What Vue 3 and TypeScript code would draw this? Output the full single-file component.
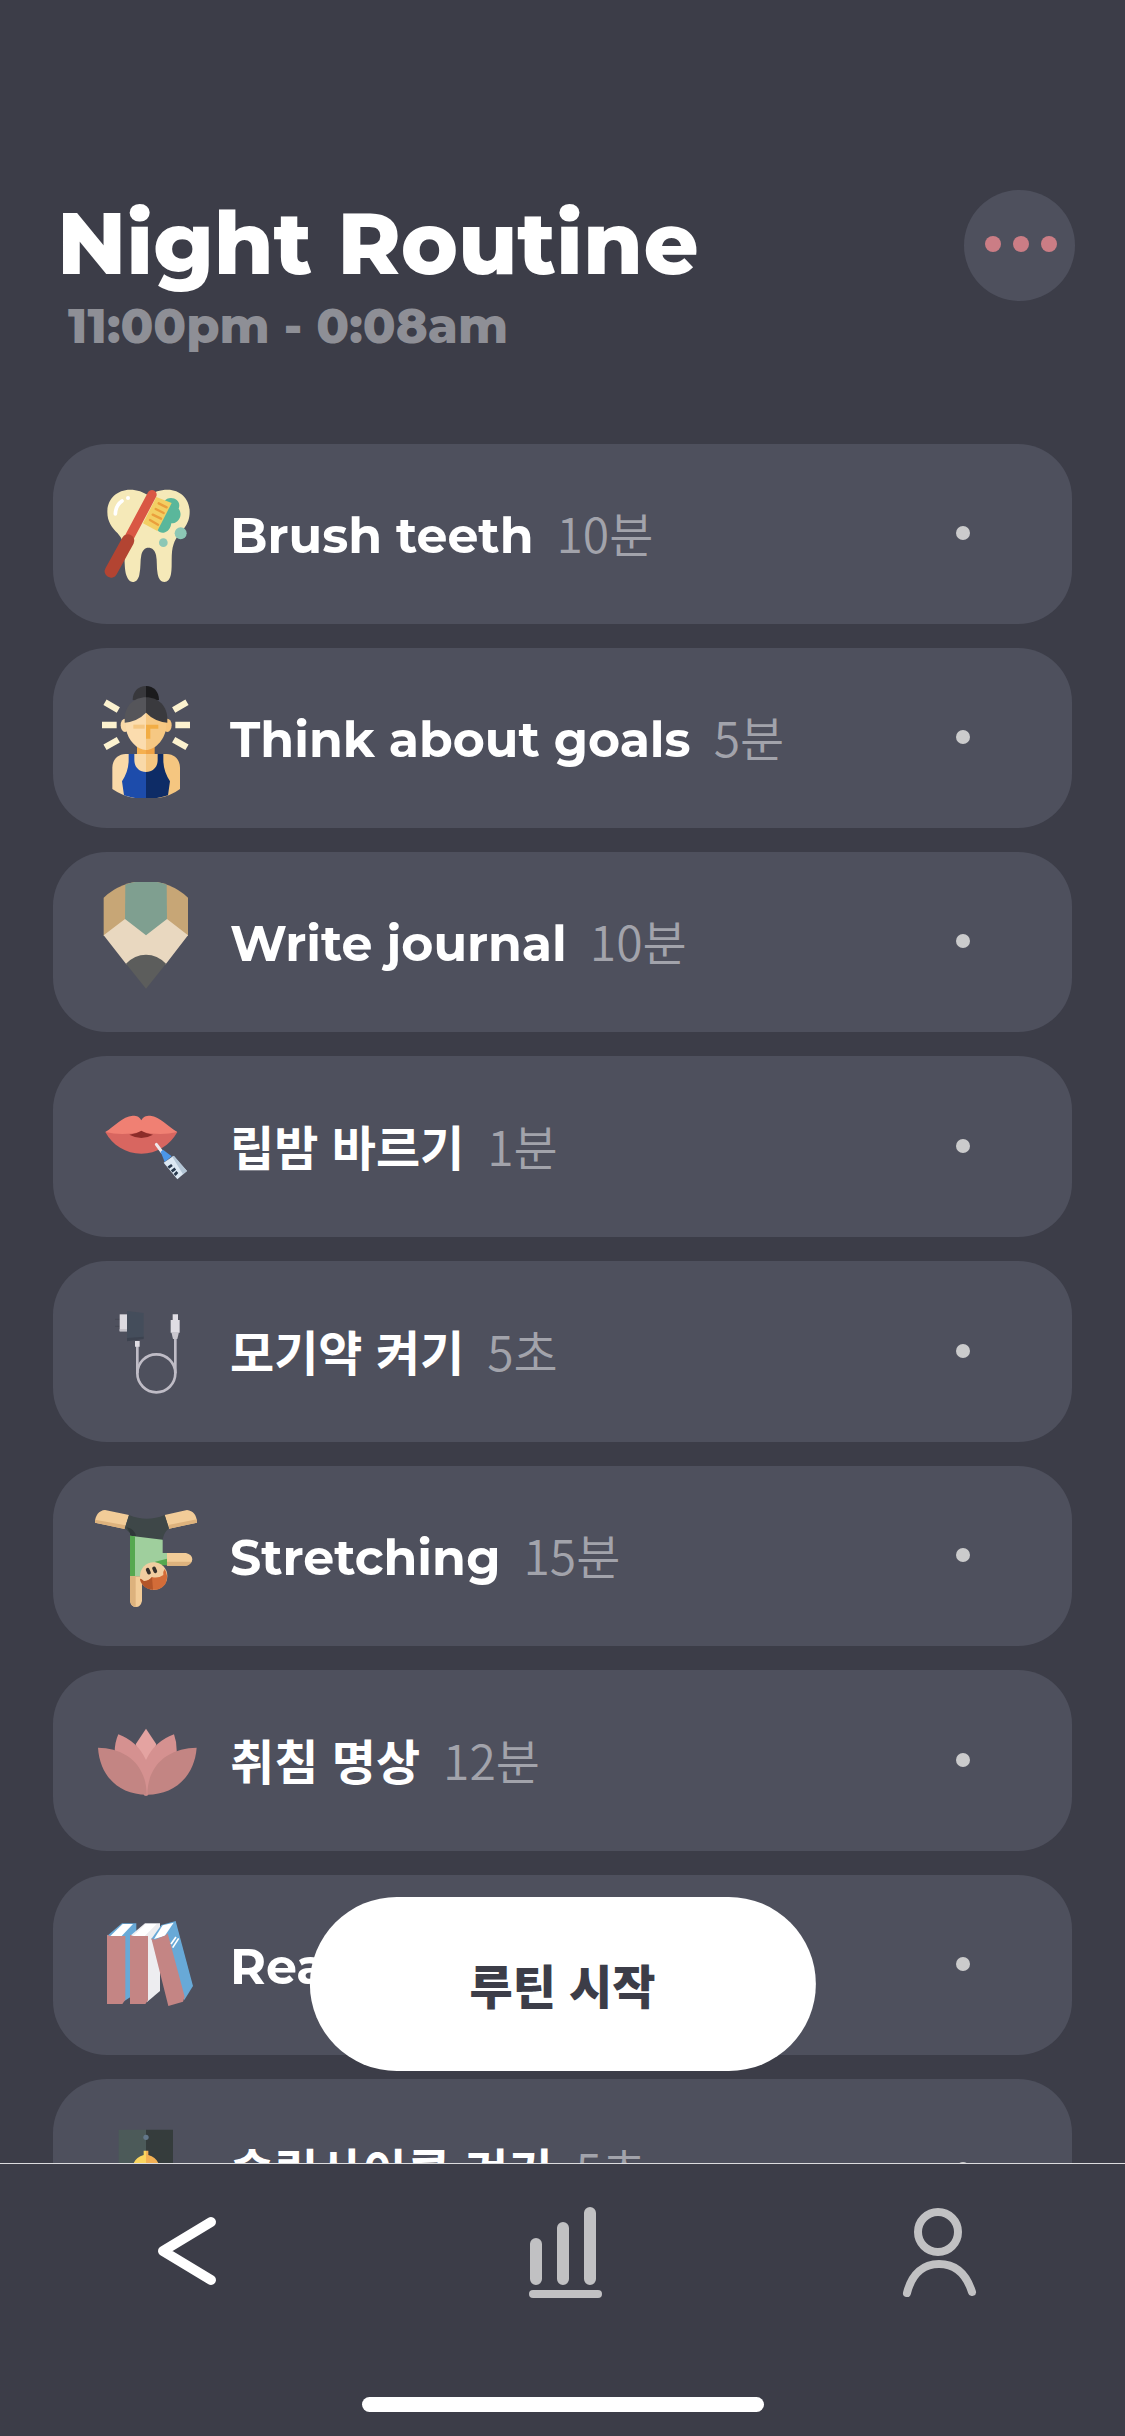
<script setup lang="ts">
type IconName = 'tooth' | 'focus' | 'pencil' | 'lips' | 'charger' | 'stretch' | 'lotus' | 'books' | 'sleep'

interface RoutineStep {
  name: string
  duration: string
  lang: 'en' | 'ko'
  icon: IconName
  viewBox: string
}

const steps: RoutineStep[] = [
  { name: 'Brush teeth', duration: '10분', lang: 'en', icon: 'tooth', viewBox: '108 102 360 360' },
  { name: 'Think about goals', duration: '5분', lang: 'en', icon: 'focus', viewBox: '108 99 360 360' },
  { name: 'Write journal', duration: '10분', lang: 'en', icon: 'pencil', viewBox: '108 96 360 360' },
  { name: '립밤 바르기', duration: '1분', lang: 'ko', icon: 'lips', viewBox: '108 94 360 360' },
  { name: '모기약 켜기', duration: '5초', lang: 'ko', icon: 'charger', viewBox: '108 94 360 360' },
  { name: 'Stretching', duration: '15분', lang: 'en', icon: 'stretch', viewBox: '108 93 360 360' },
  { name: '취침 명상', duration: '12분', lang: 'ko', icon: 'lotus', viewBox: '108 91 360 360' },
  { name: 'Reading', duration: '20분', lang: 'en', icon: 'books', viewBox: '108 105 360 360' },
  { name: '슬립사이클 켜기', duration: '5초', lang: 'ko', icon: 'sleep', viewBox: '108 718 360 360' },
]
</script>

<template>
  <div class="screen">
    <div class="content">
      <header class="header">
        <div>
          <h1 class="title">Night Routine</h1>
          <p class="time">11:00pm - 0:08am</p>
        </div>
        <button class="more" type="button" aria-label="More options">
          <span class="more-dot"></span>
          <span class="more-dot"></span>
          <span class="more-dot"></span>
        </button>
      </header>

      <ul class="list">
        <li v-for="step in steps" :key="step.name" class="card" :class="{ tall: step.lang === 'ko' }">
          <svg class="icon" :viewBox="step.viewBox" aria-hidden="true">
            <g v-if="step.icon === 'tooth'">
              <path fill="#f5e9b8" d="M295 166C280 156 262 149 240 149C200 149 172 178 172 215C172 246 186 262 203 280C216 295 222 310 223 335C224 370 224 390 229 406C233 419 240 426 248 426C258 426 265 418 268 404C273 382 270 362 274 345C277 331 285 323 295 323C307 323 315 331 318 345C322 362 319 382 323 402C326 418 333 426 343 426C353 426 360 418 363 402C368 375 361 340 371 312C378 290 392 280 403 264C413 249 419 236 419 215C419 178 392 149 353 149C330 149 312 156 295 166Z" />
              <path d="M196 222C197 202 204 191 216 183" fill="none" stroke="#fff" stroke-width="11" stroke-linecap="round" />
              <circle cx="234" cy="174" r="6" fill="#fff" />
              <path fill="#5ab79b" d="M343 184C350 172 370 170 381 181C389 189 389 198 386 206C395 218 393 235 382 244C377 249 370 250 364 250C362 265 354 276 341 278C333 279 327 276 322 270Z" />
              <path fill="#f3cf63" d="M319 171L365 189L322 273L279 250Z" />
              <path d="M326 190L350 202M317 207L341 219M308 224L333 236M300 240L324 254" fill="none" stroke="#ea9f3c" stroke-width="7" stroke-linecap="round" />
              <path d="M306 164L240 288" stroke="#d95744" stroke-width="28" stroke-linecap="round" />
              <path d="M234 302L183 394" stroke="#b34432" stroke-width="38" stroke-linecap="round" />
              <circle cx="392" cy="280" r="18" fill="#8cc7b5" />
              <circle cx="340" cy="308" r="13" fill="#8cc7b5" />
            </g>

            <g v-else-if="step.icon === 'focus'">
              <path d="M165 172L205 195M371 195L411 172M156 240H200M376 240H420M165 307L205 284M371 284L411 307" stroke="#fcf2cf" stroke-width="19" />
              <path fill="#38383c" d="M248 165C248 140 265 123 288 123V170Z" />
              <path fill="#1b1b1d" d="M327 165C327 140 311 123 288 123V170Z" />
              <ellipse cx="225" cy="241" rx="13" ry="20" fill="#f9d9a8" />
              <ellipse cx="352" cy="241" rx="13" ry="20" fill="#f5c47d" />
              <path fill="#f5b04f" d="M261 295H288V340H261Z" />
              <path fill="#efa244" d="M288 295H314V340H288Z" />
              <path fill="#f9d9a8" d="M288 327H227C203 327 187 345 187 368V432Q230 462 288 462Z" />
              <path fill="#f5c680" d="M288 327H350C374 327 390 345 390 368V432Q350 462 288 462Z" />
              <path fill="#1d4cab" d="M236 327H253V345C253 367 268 381 288 381V462Q252 461 222 451L216 409Q236 378 236 345Z" />
              <path fill="#0e2c66" d="M340 327H323V345C323 367 308 381 288 381V462Q324 461 354 451L360 409Q340 378 340 345Z" />
              <path fill="#fbdcae" d="M288 195Q244 220 228 233V252C234 287 262 315 288 315Z" />
              <path fill="#f6c883" d="M288 195Q332 220 348 233V252C342 287 314 315 288 315Z" />
              <path fill="#f5c783" d="M250 239H284V251H250Z" />
              <path fill="#f2ad45" d="M288 239H325V251H301V281H288Z" />
              <path fill="#55555a" d="M288 157C251 157 224 184 224 222V233Q263 229 288 203Z" />
              <path fill="#3a3a3e" d="M288 157C325 157 352 184 352 222V233Q313 229 288 203Z" />
            </g>

            <g v-else-if="step.icon === 'pencil'">
              <path fill="#c7a676" d="M161 143A185 185 0 0 1 414 143V258H161Z" />
              <path fill="#7f9f90" d="M226 104A185 185 0 0 1 350 104L351 215L288 262L225 215Z" />
              <path fill="#e9d8c0" d="M161 256L225 207L288 256L351 207L414 256L347 343H229Z" />
              <path fill="#5c5d5c" d="M228 341Q254 314 288 314Q322 314 348 341L288 416Z" />
            </g>

            <g v-else-if="step.icon === 'lips'">
              <path fill="#d86660" d="M166 229C187 269 228 294 274 294C320 294 360 269 382 229Q274 215 166 229Z" />
              <path fill="#f08073" d="M166 229C195 211 217 182 248 180C262 180 269 184 274 194C279 184 286 180 301 180C331 184 353 211 382 229Q330 241 274 228Q218 241 166 229Z" />
              <path fill="#8c2c29" d="M238 237Q259 235 274 225Q290 235 309 237Q291 247 274 247Q257 247 238 237Z" />
              <path d="M319 266L336 289" stroke="#eee8ec" stroke-width="9" stroke-linecap="round" />
              <path fill="#4b96e8" d="M332 288L339 282L365 302L344 319Z" />
              <path fill="#dce8f3" d="M341 321L370 301L411 346L382 371Z" />
              <path fill="#b4c6d6" d="M367 303L372 300L411 346L399 356Z" />
              <path d="M355 336L366 328M365 347L376 339M374 358L382 349" stroke="#28384c" stroke-width="8" />
            </g>

            <g v-else-if="step.icon === 'charger'">
              <path d="M195 176H211M195 197H211" stroke="#454852" stroke-width="3" />
              <path fill="#444d5b" d="M231 151L281 157V232L231 241Z" />
              <path fill="#3d4350" d="M231 232L281 228V235L231 242Z" />
              <path fill="#dcdae0" d="M209 161H231V212H209Z" />
              <path fill="#c5c3ca" d="M209 205H231V212H209Z" />
              <path d="M262 255V338M376 228V338" stroke="#bfbcc6" stroke-width="8" />
              <circle cx="319" cy="338" r="57" fill="none" stroke="#bfbcc6" stroke-width="8" />
              <path fill="#e0dde4" d="M255 241H269V258H255ZM368 161H384V180H368ZM362 178H389V216H362Z" />
              <path fill="#c9c6ce" d="M364 214H387L382 235H369Z" />
            </g>

            <g v-else-if="step.icon === 'stretch'">
              <path fill="#f2cc98" d="M237 150L165 135C147 136 135 152 135 173L224 192ZM344 150L411 135C429 137 441 151 441 173L357 191Z" />
              <path fill="#ddb27d" d="M135 164L226 181L224 192L135 173ZM355 180L441 163V173L357 191Z" />
              <path fill="#3e4748" d="M237 150Q291 173 344 150L357 190Q340 204 338 227L240 214V204L224 190Z" />
              <path fill="#303839" d="M230 187Q252 190 258 213L240 214V204Z" />
              <path fill="#9fcf9d" d="M240 212L338 224V264H351V300H315L275 334H240Z" />
              <path fill="#55a84f" d="M240 212L255 214V334H240ZM315 290L351 281V301H325Z" />
              <path fill="#f2cc98" d="M351 264H408Q426 268 427 283Q426 298 408 302H351ZM240 334H276V408Q272 426 258 426Q243 426 240 408Z" />
              <path fill="#ddb27d" d="M351 290H424Q418 302 408 302H351ZM240 334H257V426Q243 424 240 408Z" />
              <circle cx="311" cy="333" r="41" fill="#f1cda0" />
              <path fill="#d36c38" d="M270 341Q276 342 281 348Q293 350 306 336Q324 341 340 330Q338 320 344 312Q356 332 348 353C338 373 315 380 294 370C277 362 270 350 270 341Z" />
              <path fill="#b35529" d="M270 341Q276 342 281 348Q295 350 306 336L309 374Q278 373 270 341Z" />
              <path d="M293 314L297 323M312 310L316 319" stroke="#35302c" stroke-width="11" stroke-linecap="round" />
            </g>

            <g v-else-if="step.icon === 'lotus'">
              <path fill="#e4a3a1" d="M257 221L288 174L319 221L296 290H280Z" />
              <path fill="#d59190" d="M205 191Q262 212 288 268Q314 212 372 191Q381 215 380 246L292 375H284L194 246Q194 215 205 191Z" />
              <path fill="#c38583" d="M144 231C220 232 289 275 290 372C210 372 150 320 144 231ZM440 231C363 232 293 275 292 372C371 372 433 320 440 231Z" />
            </g>

            <g v-else-if="step.icon === 'books'">
              <path fill="#68a9d7" d="M171 198L216 160H259V370L222 394Z" />
              <path fill="#fff" d="M181 198L218 162H249L215 198Z" />
              <path fill="#c48584" d="M171 194L180 198H226V389L217 402H171Z" />
              <path fill="#ededf0" d="M240 198L285 160H330V363L291 396Z" />
              <path fill="#fff" d="M249 198L287 162H320L284 198Z" />
              <path fill="#c48584" d="M240 194L249 198H294V391L286 402H240Z" />
              <path fill="#68a9d7" d="M304 207L334 165L377 153L429 348L403 390Z" />
              <path fill="#fff" d="M312 207L338 166L371 158L344 198Z" />
              <path fill="#c48584" d="M304 205L314 209L347 196L353 190L404 380L399 395L355 408Z" />
              <path d="M363 222L378 201M368 233L386 205" stroke="#fff" stroke-width="5" />
            </g>

            <g v-else>
              <path fill="#4c5a59" d="M206 777H288V1000H206Z" />
              <path fill="#353c3c" d="M288 777H369V1000H288Z" />
              <circle cx="288" cy="800" r="8" fill="#63778a" />
              <path fill="#fbd65f" d="M288 840H281V853C259 858 247 876 247 898V940H288Z" />
              <path fill="#f3b154" d="M288 840H295V853C317 858 329 876 329 898V940H288Z" />
            </g>
          </svg>
          <p class="text">
            <span class="name" :lang="step.lang">{{ step.name }}</span>
            <span class="duration" lang="ko">{{ step.duration }}</span>
          </p>
          <span class="status"></span>
        </li>
      </ul>
    </div>

    <footer class="footer">
      <button class="start" type="button" lang="ko">루틴 시작</button>
      <nav class="tabs" aria-label="Main">
        <a class="tab" href="#back" aria-label="Back">
          <svg class="tab-icon active" viewBox="0 0 90 100" aria-hidden="true">
            <path d="M68 21L20 50L68 79" stroke-width="10" />
          </svg>
        </a>
        <a class="tab" href="#stats" aria-label="Statistics">
          <svg class="tab-icon" viewBox="-2 0 90 100" aria-hidden="true">
            <path d="M16 43V78M43 27V78M70 12V78" stroke-width="12" />
            <path d="M13 93H78" stroke-width="8" />
          </svg>
        </a>
        <a class="tab" href="#profile" aria-label="Profile">
          <svg class="tab-icon" viewBox="-2 0 90 100" aria-hidden="true">
            <circle cx="43" cy="31" r="20" stroke-width="8" />
            <path d="M12 92C17 72 29 63 44 63C60 63 71 72 77 91" stroke-width="8" />
          </svg>
        </a>
      </nav>
      <div class="home-bar"></div>
    </footer>
  </div>
</template>

<style>
body {
  margin: 0;
  background: #3c3d48;
}
</style>

<style scoped>
.screen {
  display: flex;
  flex-direction: column;
  height: 100vh;
  background: #3c3d48;
  color: #fff;
  font-family: Montserrat, Inter, 'Noto Sans CJK KR', sans-serif;
}

.content {
  flex: 1;
  min-height: 0;
  overflow-y: auto;
  scrollbar-width: none;
}

.header {
  display: flex;
  align-items: flex-start;
  justify-content: space-between;
  padding: 190px 50px 0 57px;
}

.title {
  margin: 0;
  font-size: 86px;
  line-height: 108px;
  font-weight: 800;
}

.time {
  margin: 0;
  padding-left: 11px;
  color: #8e8f96;
  font-size: 48px;
  line-height: 56px;
  font-weight: 800;
}

.more {
  display: flex;
  align-items: center;
  justify-content: center;
  gap: 12px;
  width: 111px;
  height: 111px;
  padding: 0 0 4px 2px;
  border: 0;
  border-radius: 50%;
  background: #4e505d;
}

.more-dot {
  width: 16px;
  height: 16px;
  border-radius: 50%;
  background: #cb7d85;
}

.list {
  display: flex;
  flex-direction: column;
  gap: 24px;
  margin: 0;
  padding: 90px 53px 24px;
  list-style: none;
}

.card {
  display: flex;
  align-items: center;
  box-sizing: border-box;
  min-height: 180px;
  padding: 0 102px 0 33px;
  border-radius: 54px;
  background: #4e505d;
}

.card.tall {
  min-height: 181px;
}

.icon {
  flex: none;
  width: 120px;
  height: 120px;
  margin-right: 24px;
}

.text {
  margin: 0;
  font-size: 49px;
  line-height: 60px;
}

.name {
  font-weight: 700;
}

.name:lang(ko) {
  font-family: 'Noto Sans CJK KR', sans-serif;
  font-size: 48px;
}

.duration {
  display: inline-block;
  margin-left: 10px;
  color: #a2a3ab;
  font-family: 'Noto Sans CJK KR', sans-serif;
  font-size: 48px;
  font-weight: 350;
}

.name + .duration {
  margin-left: 23px;
}

.status {
  width: 14px;
  height: 14px;
  margin: 0 0 2px auto;
  border-radius: 50%;
  background: #cbcbcc;
}

.footer {
  position: relative;
  box-sizing: border-box;
  padding: 37px 0 24px;
  border-top: 1px solid #dcdcde;
  background: #3c3d48;
}

.start {
  position: absolute;
  bottom: calc(100% + 93px);
  left: 50%;
  width: 45%;
  height: 174px;
  padding: 0 0 2px;
  border: 0;
  border-radius: 87px;
  background: #fff;
  color: #3c3d48;
  font-family: 'Noto Sans CJK KR', sans-serif;
  font-size: 47px;
  font-weight: 900;
  transform: translateX(-50%);
}

.tabs {
  display: flex;
}

.tab {
  display: flex;
  flex: 1;
  justify-content: center;
}

.tab-icon {
  width: 90px;
  height: 100px;
  fill: none;
  stroke: #c1c1c3;
  stroke-linecap: round;
  stroke-linejoin: round;
}

.tab-icon.active {
  stroke: #fff;
}

.home-bar {
  width: 402px;
  height: 15px;
  margin: 96px auto 0;
  border-radius: 8px;
  background: #fff;
}
</style>
